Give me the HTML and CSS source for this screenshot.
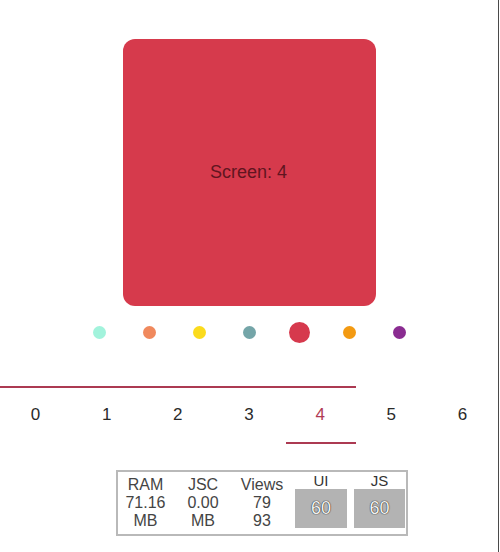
FILE: index.html
```html
<!DOCTYPE html>
<html>
<head>
<meta charset="utf-8">
<link rel="stylesheet" href="styles.css">
</head>
<body>
<div class="frame">
  <div class="card"><span class="card-label">Screen: 4</span></div>
  <div class="dots">
    <div class="slot"><span class="dot dot-aqua"></span></div>
    <div class="slot"><span class="dot dot-salmon"></span></div>
    <div class="slot"><span class="dot dot-yellow"></span></div>
    <div class="slot"><span class="dot dot-teal"></span></div>
    <div class="slot"><span class="dot dot-red dot-active"></span></div>
    <div class="slot"><span class="dot dot-orange"></span></div>
    <div class="slot"><span class="dot dot-purple"></span></div>
  </div>
  <div class="tabs">
    <div class="progress"></div>
    <div class="tab-row">
      <div class="tab">0</div>
      <div class="tab">1</div>
      <div class="tab">2</div>
      <div class="tab">3</div>
      <div class="tab tab-active">4</div>
      <div class="tab">5</div>
      <div class="tab">6</div>
    </div>
    <div class="indicator-row"><div class="indicator"></div></div>
  </div>
  <div class="stats">
    <div class="col col-ram"><div>RAM</div><div>71.16</div><div>MB</div></div>
    <div class="col col-jsc"><div>JSC</div><div>0.00</div><div>MB</div></div>
    <div class="col col-views"><div>Views</div><div>79</div><div>93</div></div>
    <div class="fps fps-ui"><div class="fps-label">UI</div><div class="fps-box">60</div></div>
    <div class="fps fps-js"><div class="fps-label">JS</div><div class="fps-box">60</div></div>
  </div>
</div>
</body>
</html>
```
FILE: styles.css
```css
html, body {
  margin: 0;
  padding: 0;
  background: #ffffff;
}
body {
  font-family: "Liberation Sans", Arial, sans-serif;
}
.frame {
  width: 499px;
  height: 552px;
  border-right: 1px solid #4a4a4a;
  padding-top: 39px;
  box-sizing: border-box;
  overflow: hidden;
}
.card {
  width: 253px;
  height: 267px;
  margin-left: 123px;
  background: #d63a4c;
  border-radius: 12px;
  display: flex;
  align-items: center;
  justify-content: center;
}
.card-label {
  font-size: 18px;
  color: #611520;
  margin-left: -2px;
}
.dots {
  display: flex;
  margin-left: 74px;
  margin-top: 16px;
  height: 21px;
}
.slot {
  width: 50px;
  display: flex;
  align-items: center;
  justify-content: center;
}
.dot {
  width: 13px;
  height: 13px;
  border-radius: 50%;
  display: block;
}
.dot-active {
  width: 21px;
  height: 21px;
}
.dot-aqua { background: #a2f3dc; }
.dot-salmon { background: #f0895d; }
.dot-yellow { background: #fbdb1d; }
.dot-teal { background: #74a5a8; }
.dot-red { background: #d6394d; }
.dot-orange { background: #f39a12; }
.dot-purple { background: #8a2c91; }
.tabs {
  margin-top: 43px;
}
.progress {
  width: 356px;
  height: 2px;
  background: #ac3a52;
}
.tab-row {
  display: flex;
  height: 54px;
}
.tab {
  width: 71.43px;
  display: flex;
  align-items: center;
  justify-content: center;
  font-size: 17px;
  color: #2a2a2a;
}
.tab-active {
  color: #b03a54;
}
.indicator-row {
  height: 2px;
  padding-left: 285.7px;
}
.indicator {
  width: 70.5px;
  height: 2px;
  background: #ac3a52;
}
.stats {
  margin-top: 26px;
  margin-left: 116px;
  width: 292px;
  height: 66px;
  box-sizing: border-box;
  border: 2px solid #b9b9b9;
  display: flex;
  color: #444444;
  font-size: 16px;
}
.col {
  padding-top: 4px;
  line-height: 18px;
  text-align: center;
}
.col-ram { width: 55px; }
.col-jsc { width: 60px; }
.col-views { width: 58px; }
.fps {
  display: flex;
  flex-direction: column;
  align-items: center;
}
.fps-ui {
  margin-left: 4px;
  width: 52px;
}
.fps-js {
  margin-left: 7px;
  width: 51px;
}
.fps-label {
  height: 17px;
  line-height: 17px;
  font-size: 15px;
  color: #333333;
}
.fps-box {
  width: 100%;
  height: 39px;
  background: #b3b3b3;
  color: #f2f2f2;
  font-size: 18px;
  display: flex;
  align-items: center;
  justify-content: center;
  text-shadow: 0 0 1px #222, 0 0 1px #222;
}
```
